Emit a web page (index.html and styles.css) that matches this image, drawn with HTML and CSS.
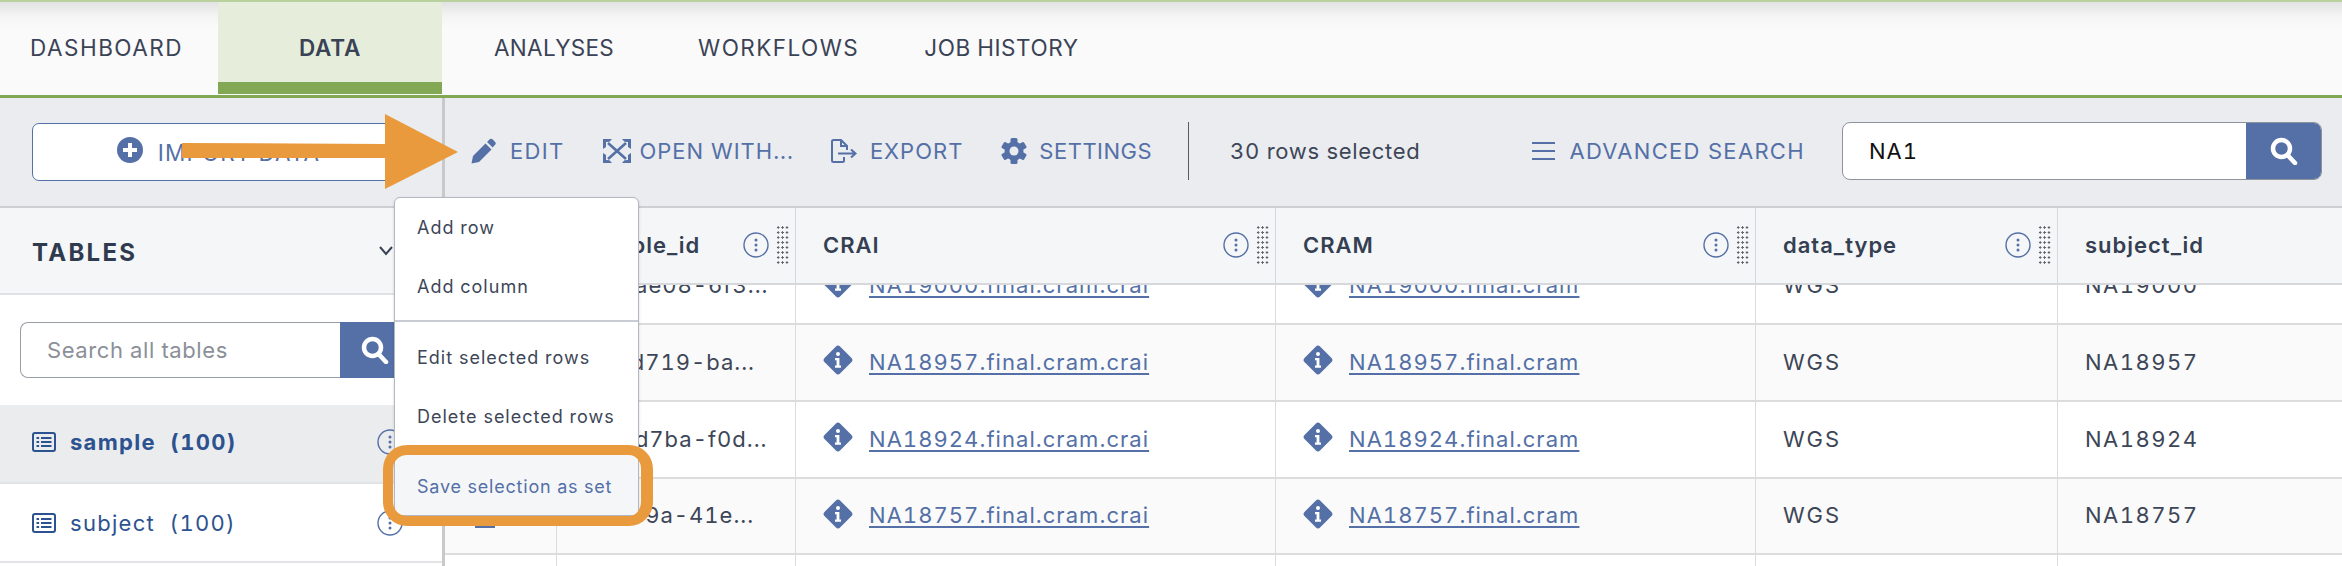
FILE: index.html
```html
<!DOCTYPE html>
<html lang="en">
<head>
<meta charset="utf-8">
<title>Data</title>
<link rel="stylesheet" href="styles.css">
</head>
<body>
<svg class="defs" width="0" height="0">
  <symbol id="i-search" viewBox="0 0 28 28">
    <circle cx="11.5" cy="11.5" r="8.5" fill="none" stroke="#fff" stroke-width="4.5"/>
    <path d="M17.5 18l7.5 8" stroke="#fff" stroke-width="4.5" stroke-linecap="round"/>
  </symbol>
  <symbol id="i-more" viewBox="0 0 26 26">
    <circle cx="13" cy="13" r="12" fill="none" stroke="currentColor" stroke-width="1.4"/>
    <circle cx="13" cy="8" r="1.5" fill="currentColor"/>
    <circle cx="13" cy="13" r="1.5" fill="currentColor"/>
    <circle cx="13" cy="18" r="1.5" fill="currentColor"/>
  </symbol>
  <symbol id="i-diamond" viewBox="0 0 30 30">
    <path d="M12.7 1.7a3.2 3.2 0 0 1 4.6 0l11 11a3.2 3.2 0 0 1 0 4.6l-11 11a3.2 3.2 0 0 1-4.6 0l-11-11a3.2 3.2 0 0 1 0-4.6z" fill="#5470a6"/>
    <circle cx="15" cy="9" r="2" fill="#fff"/>
    <path d="M12 13h4.4v7.6H18v2.2h-6v-2.2h1.6v-5.4H12z" fill="#fff"/>
  </symbol>
  <symbol id="i-list" viewBox="0 0 24 20">
    <rect x="1" y="1" width="22" height="18" rx="2" fill="none" stroke="#2d5290" stroke-width="2"/>
    <path d="M4.5 5h2.6v2H4.500zM4.500 9h2.600v2H4.500zM4.500 13h2.600v2H4.500zM9 5h10.500v2H9zM9 9h10.500v2H9zM9 13h10.500v2H9z" fill="#2d5290"/>
  </symbol>
</svg>

<header class="nav">
  <a class="tab tab-first">DASHBOARD</a>
  <a class="tab tab-active">DATA</a>
  <a class="tab tab-analyses">ANALYSES</a>
  <a class="tab tab-workflows">WORKFLOWS</a>
  <a class="tab tab-jobs">JOB HISTORY</a>
</header>

<section class="toolbar">
  <div class="toolbar-left">
    <button class="import">
      <svg class="import-icon" viewBox="0 0 26 26"><circle cx="13" cy="13" r="13" fill="#5470a6"/><path d="M11 6h4v5h5v4h-5v5h-4v-5H6v-4h5z" fill="#fff"/></svg>
      <span>IMPORT DATA</span>
    </button>
  </div>
  <div class="actions">
    <a class="action action-edit">
      <svg class="ic-edit" viewBox="0 0 26 26"><path d="M1 25.500l1.500-7.500L15 5.500l6 6L8.500 24z" fill="#5470a6"/><path d="M16.600 3.900l2.300-2.300a2.400 2.400 0 0 1 3.400 0l2.100 2.100a2.400 2.400 0 0 1 0 3.400l-2.300 2.300z" fill="#5470a6"/></svg>
      <span>EDIT</span>
    </a>
    <a class="action action-open">
      <svg class="ic-open" viewBox="0 0 28 24"><path d="M5 4l18 16M23 4L5 20" stroke="#5470a6" stroke-width="2.600"/><path d="M0 0h9L6.500 2.800 3 3v5L0 10zM28 0h-9l2.500 2.800L25 3v5l3 2zM0 24h9l-2.500-2.800L3 21v-5l-3-2zM28 24h-9l2.500-2.800L25 21v-5l3-2z" fill="#5470a6"/></svg>
      <span>OPEN WITH...</span>
    </a>
    <a class="action action-export">
      <svg class="ic-export" viewBox="0 0 26 24"><path d="M13 18H13v3.500a1.500 1.500 0 0 1-1.500 1.500h-9A1.500 1.500 0 0 1 1 21.500v-19A1.500 1.500 0 0 1 2.500 1H10l6 6v4" fill="none" stroke="#5470a6" stroke-width="2"/><path d="M10 1v6h6M7 14.500h17M20 10.500l4.500 4-4.500 4" fill="none" stroke="#5470a6" stroke-width="2"/></svg>
      <span>EXPORT</span>
    </a>
    <a class="action action-settings">
      <svg class="ic-gear" viewBox="0 0 26 26"><g fill="#5470a6"><rect x="9.500" y="0" width="7" height="26" rx="1.500"/><rect x="9.500" y="0" width="7" height="26" rx="1.500" transform="rotate(60 13 13)"/><rect x="9.500" y="0" width="7" height="26" rx="1.500" transform="rotate(120 13 13)"/><circle cx="13" cy="13" r="9.500"/></g><circle cx="13" cy="13" r="4.500" fill="#eaecf0"/></svg>
      <span>SETTINGS</span>
    </a>
    <span class="divider"></span>
    <span class="selected">30 rows selected</span>
    <a class="action action-advanced">
      <svg class="ic-lines" viewBox="0 0 23 18"><path d="M0 1h23M0 9h23M0 17h23" stroke="#5470a6" stroke-width="2"/></svg>
      <span>ADVANCED SEARCH</span>
    </a>
    <div class="global-search">
      <span class="global-value">NA1</span>
      <span class="global-btn"><svg class="ic-search"><use href="#i-search"/></svg></span>
    </div>
  </div>
</section>

<main class="main">
  <aside class="sidebar">
    <div class="side-head">
      <span class="side-title">TABLES</span>
      <svg class="chev" viewBox="0 0 14 10"><path d="M1 1l6 7 6-7" fill="none" stroke="#3a4356" stroke-width="2"/></svg>
    </div>
    <div class="side-search">
      <div class="side-input">Search all tables</div>
      <span class="side-btn"><svg class="ic-search"><use href="#i-search"/></svg></span>
    </div>
    <div class="side-row side-row-active">
      <svg class="ic-list"><use href="#i-list"/></svg>
      <span class="side-name">sample&nbsp;&nbsp;(100)</span>
      <svg class="ic-more side-more"><use href="#i-more"/></svg>
    </div>
    <div class="side-row">
      <svg class="ic-list"><use href="#i-list"/></svg>
      <span class="side-name">subject&nbsp;&nbsp;(100)</span>
      <svg class="ic-more side-more"><use href="#i-more"/></svg>
    </div>
  </aside>

  <section class="table">
    <div class="grid thead">
      <div class="th"></div>
      <div class="th"><span class="th-name">sample_id</span><svg class="ic-more"><use href="#i-more"/></svg><i class="grip"></i></div>
      <div class="th"><span class="th-name">CRAI</span><svg class="ic-more"><use href="#i-more"/></svg><i class="grip"></i></div>
      <div class="th"><span class="th-name">CRAM</span><svg class="ic-more"><use href="#i-more"/></svg><i class="grip"></i></div>
      <div class="th"><span class="th-name">data_type</span><svg class="ic-more"><use href="#i-more"/></svg><i class="grip"></i></div>
      <div class="th"><span class="th-name">subject_id</span></div>
    </div>
    <div class="tbody">
      <div class="grid row row-first">
        <div class="td"><span class="check"></span></div>
        <div class="td td-id">1c6ae08-6f3...</div>
        <div class="td"><svg class="ic-diamond"><use href="#i-diamond"/></svg><a class="file">NA19000.final.cram.crai</a></div>
        <div class="td"><svg class="ic-diamond"><use href="#i-diamond"/></svg><a class="file">NA19000.final.cram</a></div>
        <div class="td">WGS</div>
        <div class="td td-num">NA19000</div>
      </div>
      <div class="grid row row-alt">
        <div class="td"><span class="check"></span></div>
        <div class="td td-id">5f7d719-ba...</div>
        <div class="td"><svg class="ic-diamond"><use href="#i-diamond"/></svg><a class="file">NA18957.final.cram.crai</a></div>
        <div class="td"><svg class="ic-diamond"><use href="#i-diamond"/></svg><a class="file">NA18957.final.cram</a></div>
        <div class="td">WGS</div>
        <div class="td td-num">NA18957</div>
      </div>
      <div class="grid row">
        <div class="td"><span class="check"></span></div>
        <div class="td td-id">a30d7ba-f0d...</div>
        <div class="td"><svg class="ic-diamond"><use href="#i-diamond"/></svg><a class="file">NA18924.final.cram.crai</a></div>
        <div class="td"><svg class="ic-diamond"><use href="#i-diamond"/></svg><a class="file">NA18924.final.cram</a></div>
        <div class="td">WGS</div>
        <div class="td td-num">NA18924</div>
      </div>
      <div class="grid row row-alt row-short">
        <div class="td"><span class="check"></span></div>
        <div class="td td-id">72fb9a-41e...</div>
        <div class="td"><svg class="ic-diamond"><use href="#i-diamond"/></svg><a class="file">NA18757.final.cram.crai</a></div>
        <div class="td"><svg class="ic-diamond"><use href="#i-diamond"/></svg><a class="file">NA18757.final.cram</a></div>
        <div class="td">WGS</div>
        <div class="td td-num">NA18757</div>
      </div>
      <div class="grid row">
        <div class="td"></div><div class="td"></div><div class="td"></div><div class="td"></div><div class="td"></div><div class="td"></div>
      </div>
    </div>
  </section>
</main>

<div class="menu">
  <div class="menu-item">Add row</div>
  <div class="menu-item">Add column</div>
  <div class="menu-sep"></div>
  <div class="menu-item">Edit selected rows</div>
  <div class="menu-item">Delete selected rows</div>
  <div class="menu-item menu-item-hover">Save selection as set</div>
</div>
<div class="highlight"></div>
<svg class="arrow" viewBox="0 0 276 75"><path d="M0 29l203 1V0l73 38-73 37V44H0z" fill="#e99a3c"/></svg>
</body>
</html>
```

FILE: styles.css
```css
* { box-sizing: border-box; }
html, body { margin: 0; padding: 0; }
body {
  position: relative;
  width: 2342px;
  height: 566px;
  overflow: hidden;
  background: #fff;
  font-family: Inter, "Liberation Sans", sans-serif;
  font-size: 22px;
  font-variant-numeric: tabular-nums;
  color: #3d4657;
}
.defs { position: absolute; }

/* Nav */
.nav {
  display: flex;
  height: 98px;
  border-top: 2px solid #b9d19c;
  border-bottom: 3px solid #82a855;
  background: linear-gradient(#e2e2e2, #f4f4f4 14px, #fafafa 26px);
  padding-bottom: 1px;
}
.tab {
  display: flex;
  align-items: center;
  font-size: 22.500px;
  color: #3a4356;
  padding-bottom: 2px;
}
.tab-first { width: 218px; padding-left: 30px; letter-spacing: 1.500px; }
.tab-active {
  width: 224px;
  justify-content: center;
  background: #e6eedb;
  border-bottom: 12px solid #82a855;
  font-weight: 600;
  letter-spacing: .8px;
  padding-bottom: 0;
  padding-top: 10px;
}
.tab-analyses { margin-left: 52px; letter-spacing: .3px; }
.tab-workflows { margin-left: 84px; letter-spacing: 1.450px; }
.tab-jobs { margin-left: 65px; letter-spacing: .55px; }

/* Toolbar */
.toolbar {
  display: flex;
  height: 110px;
  background: #eaecf0;
  border-bottom: 2px solid #cdcfd4;
}
.toolbar-left {
  width: 445px;
  flex: none;
  padding: 25px 43px 0 32px;
  border-right: 3px solid #c9c9c9;
}
.import {
  display: flex;
  align-items: center;
  justify-content: center;
  gap: 15px;
  width: 100%;
  height: 58px;
  padding: 0 0 0 6px;
  background: #fff;
  border: 1.500px solid #5470a6;
  border-radius: 7px;
  color: #5470a6;
  font: inherit;
  font-size: 22.500px;
  letter-spacing: 1.100px;
}
.import-icon { width: 26px; height: 26px; margin-top: -4px; }
.actions {
  display: flex;
  align-items: center;
  flex: 1;
  padding: 0 20px 2px 25px;
}
.action {
  display: flex;
  align-items: center;
  gap: 13px;
  color: #5470a6;
  font-size: 22px;
}
.ic-edit { width: 27px; height: 26px; }
.ic-open { width: 28px; height: 24px; }
.ic-export { width: 26px; height: 24px; }
.ic-gear { width: 26px; height: 26px; }
.ic-lines { width: 23px; height: 18px; }
.action-edit { letter-spacing: 1.300px; }
.action-open { margin-left: 39px; gap: 8px; letter-spacing: 1px; }
.action-export { margin-left: 37px; letter-spacing: 1px; }
.action-settings { margin-left: 38px; gap: 12px; letter-spacing: .5px; }
.divider { width: 1px; height: 58px; margin-left: 36px; background: #555b66; }
.selected { margin-left: 41px; font-size: 22px; letter-spacing: .7px; color: #3d4657; }
.action-advanced { margin-left: 112px; gap: 14px; letter-spacing: 1.300px; }
.global-search {
  display: flex;
  align-items: stretch;
  width: 480px;
  height: 58px;
  margin-left: auto;
  background: #fff;
  border: 1.500px solid #8f939c;
  border-radius: 8px;
  overflow: hidden;
}
.global-value {
  flex: 1;
  display: flex;
  align-items: center;
  padding-left: 26px;
  color: #111;
  font-size: 22px;
  letter-spacing: 1px;
}
.global-btn {
  display: flex;
  align-items: center;
  justify-content: center;
  width: 75px;
  background: #5470a6;
}
.ic-search { width: 28px; height: 28px; }

/* Main */
.main { display: flex; height: 358px; }
.sidebar {
  width: 445px;
  flex: none;
  border-right: 3px solid #c9c9c9;
  background: #fff;
}
.side-head {
  display: flex;
  align-items: center;
  justify-content: space-between;
  height: 87px;
  padding: 4px 49px 0 32px;
  background: #f4f6f8;
  border-bottom: 2px solid #dfe1e5;
}
.side-title { font-size: 24px; font-weight: 700; color: #2f3a4e; letter-spacing: 2.300px; }
.chev { width: 14px; height: 10px; margin-top: -3px; }
.side-search {
  display: flex;
  height: 110px;
  padding: 27px 0 0 20px;
}
.side-input {
  width: 320px;
  height: 56px;
  padding-left: 26px;
  display: flex;
  align-items: center;
  border: 1.500px solid #9a9ea6;
  border-right: 0;
  border-radius: 8px 0 0 8px;
  font-size: 22px;
  letter-spacing: .6px;
  color: #8a8f98;
}
.side-btn {
  display: flex;
  align-items: center;
  justify-content: center;
  width: 78px;
  height: 56px;
  background: #5470a6;
  padding-right: 8px;
}
.side-row {
  display: flex;
  align-items: center;
  height: 79px;
  padding: 0 0 0 32px;
  border-bottom: 2px solid #e1e3e7;
  color: #2d5290;
}
.side-row-active { background: #ebecee; font-weight: 700; padding-bottom: 3px; }
.ic-list { width: 24px; height: 20px; flex: none; }
.side-name { margin-left: 14px; font-size: 22px; letter-spacing: 1.300px; }
.side-more { margin-left: auto; margin-right: 39px; color: #3a4356; }

/* Table */
.table { flex: 1; min-width: 0; }
.grid {
  display: grid;
  grid-template-columns: 112px 239px 480px 480px 302px 1fr;
}
.thead { height: 77px; background: #f4f6f8; border-bottom: 2px solid #d6d8dc; }
.th {
  display: flex;
  align-items: center;
  padding: 0 6px 2px 27px;
  border-right: 1px solid #d6d8dc;
  font-size: 22px;
  font-weight: 600;
  letter-spacing: 1px;
  color: #353f52;
}
.th:last-child { border-right: 0; }
.th-name { flex: 1; }
.ic-more { width: 26px; height: 26px; flex: none; color: #5470a6; }
.grip {
  display: block;
  flex: none;
  width: 13px;
  height: 40px;
  margin-left: 7px;
  background-image: radial-gradient(circle, #5f6368 1px, transparent 1.300px);
  background-size: 4.400px 5px;
}
.tbody { height: 281px; overflow: hidden; }
.row { height: 77px; border-bottom: 2px solid #dcdcdc; background: #fff; }
.row-first { margin-top: -37px; }
.row-alt { background: #fafafa; }
.row-short { height: 76px; }
.td {
  display: flex;
  align-items: center;
  gap: 16px;
  padding: 0 0 2px 27px;
  border-right: 1px solid #dcdcdc;
  font-size: 22px;
  letter-spacing: 1.900px;
  color: #3d4657;
}
.td:last-child { border-right: 0; }
.td-num { letter-spacing: 1.500px; }
.td-id { letter-spacing: 1px; padding-left: 34px; }
.check {
  display: block;
  width: 20px;
  height: 24px;
  margin: 2px 0 0 3px;
  background: #5470a6;
}
.ic-diamond { width: 30px; height: 30px; flex: none; margin-top: -3px; }
.file {
  color: #5470a6;
  text-decoration: underline;
  text-decoration-thickness: 2px;
  text-underline-offset: 3px;
  letter-spacing: 1.050px;
}

/* Overlays */
.menu {
  position: absolute;
  left: 394px;
  top: 197px;
  width: 245px;
  height: 319px;
  background: #fff;
  border: 1px solid #b4b7bf;
  border-radius: 6px;
  box-shadow: 0 1px 3px rgba(0, 0, 0, .15);
  overflow: hidden;
}
.menu-item {
  display: flex;
  align-items: center;
  height: 59px;
  padding-left: 22px;
  font-size: 18px;
  letter-spacing: 1px;
  color: #3d4657;
}
.menu-sep { height: 2px; margin: 4px 0 6px; background: #c9ccd2; }
.menu-item-hover { height: 62px; margin-top: 9px; background: #f4f6f8; color: #5470a6; letter-spacing: .8px; }
.highlight {
  position: absolute;
  left: 383px;
  top: 445px;
  width: 270px;
  height: 81px;
  border: 10px solid #e99a3c;
  border-right-width: 12px;
  border-radius: 24px;
}
.arrow {
  position: absolute;
  left: 182px;
  top: 114px;
  width: 276px;
  height: 75px;
}
```
